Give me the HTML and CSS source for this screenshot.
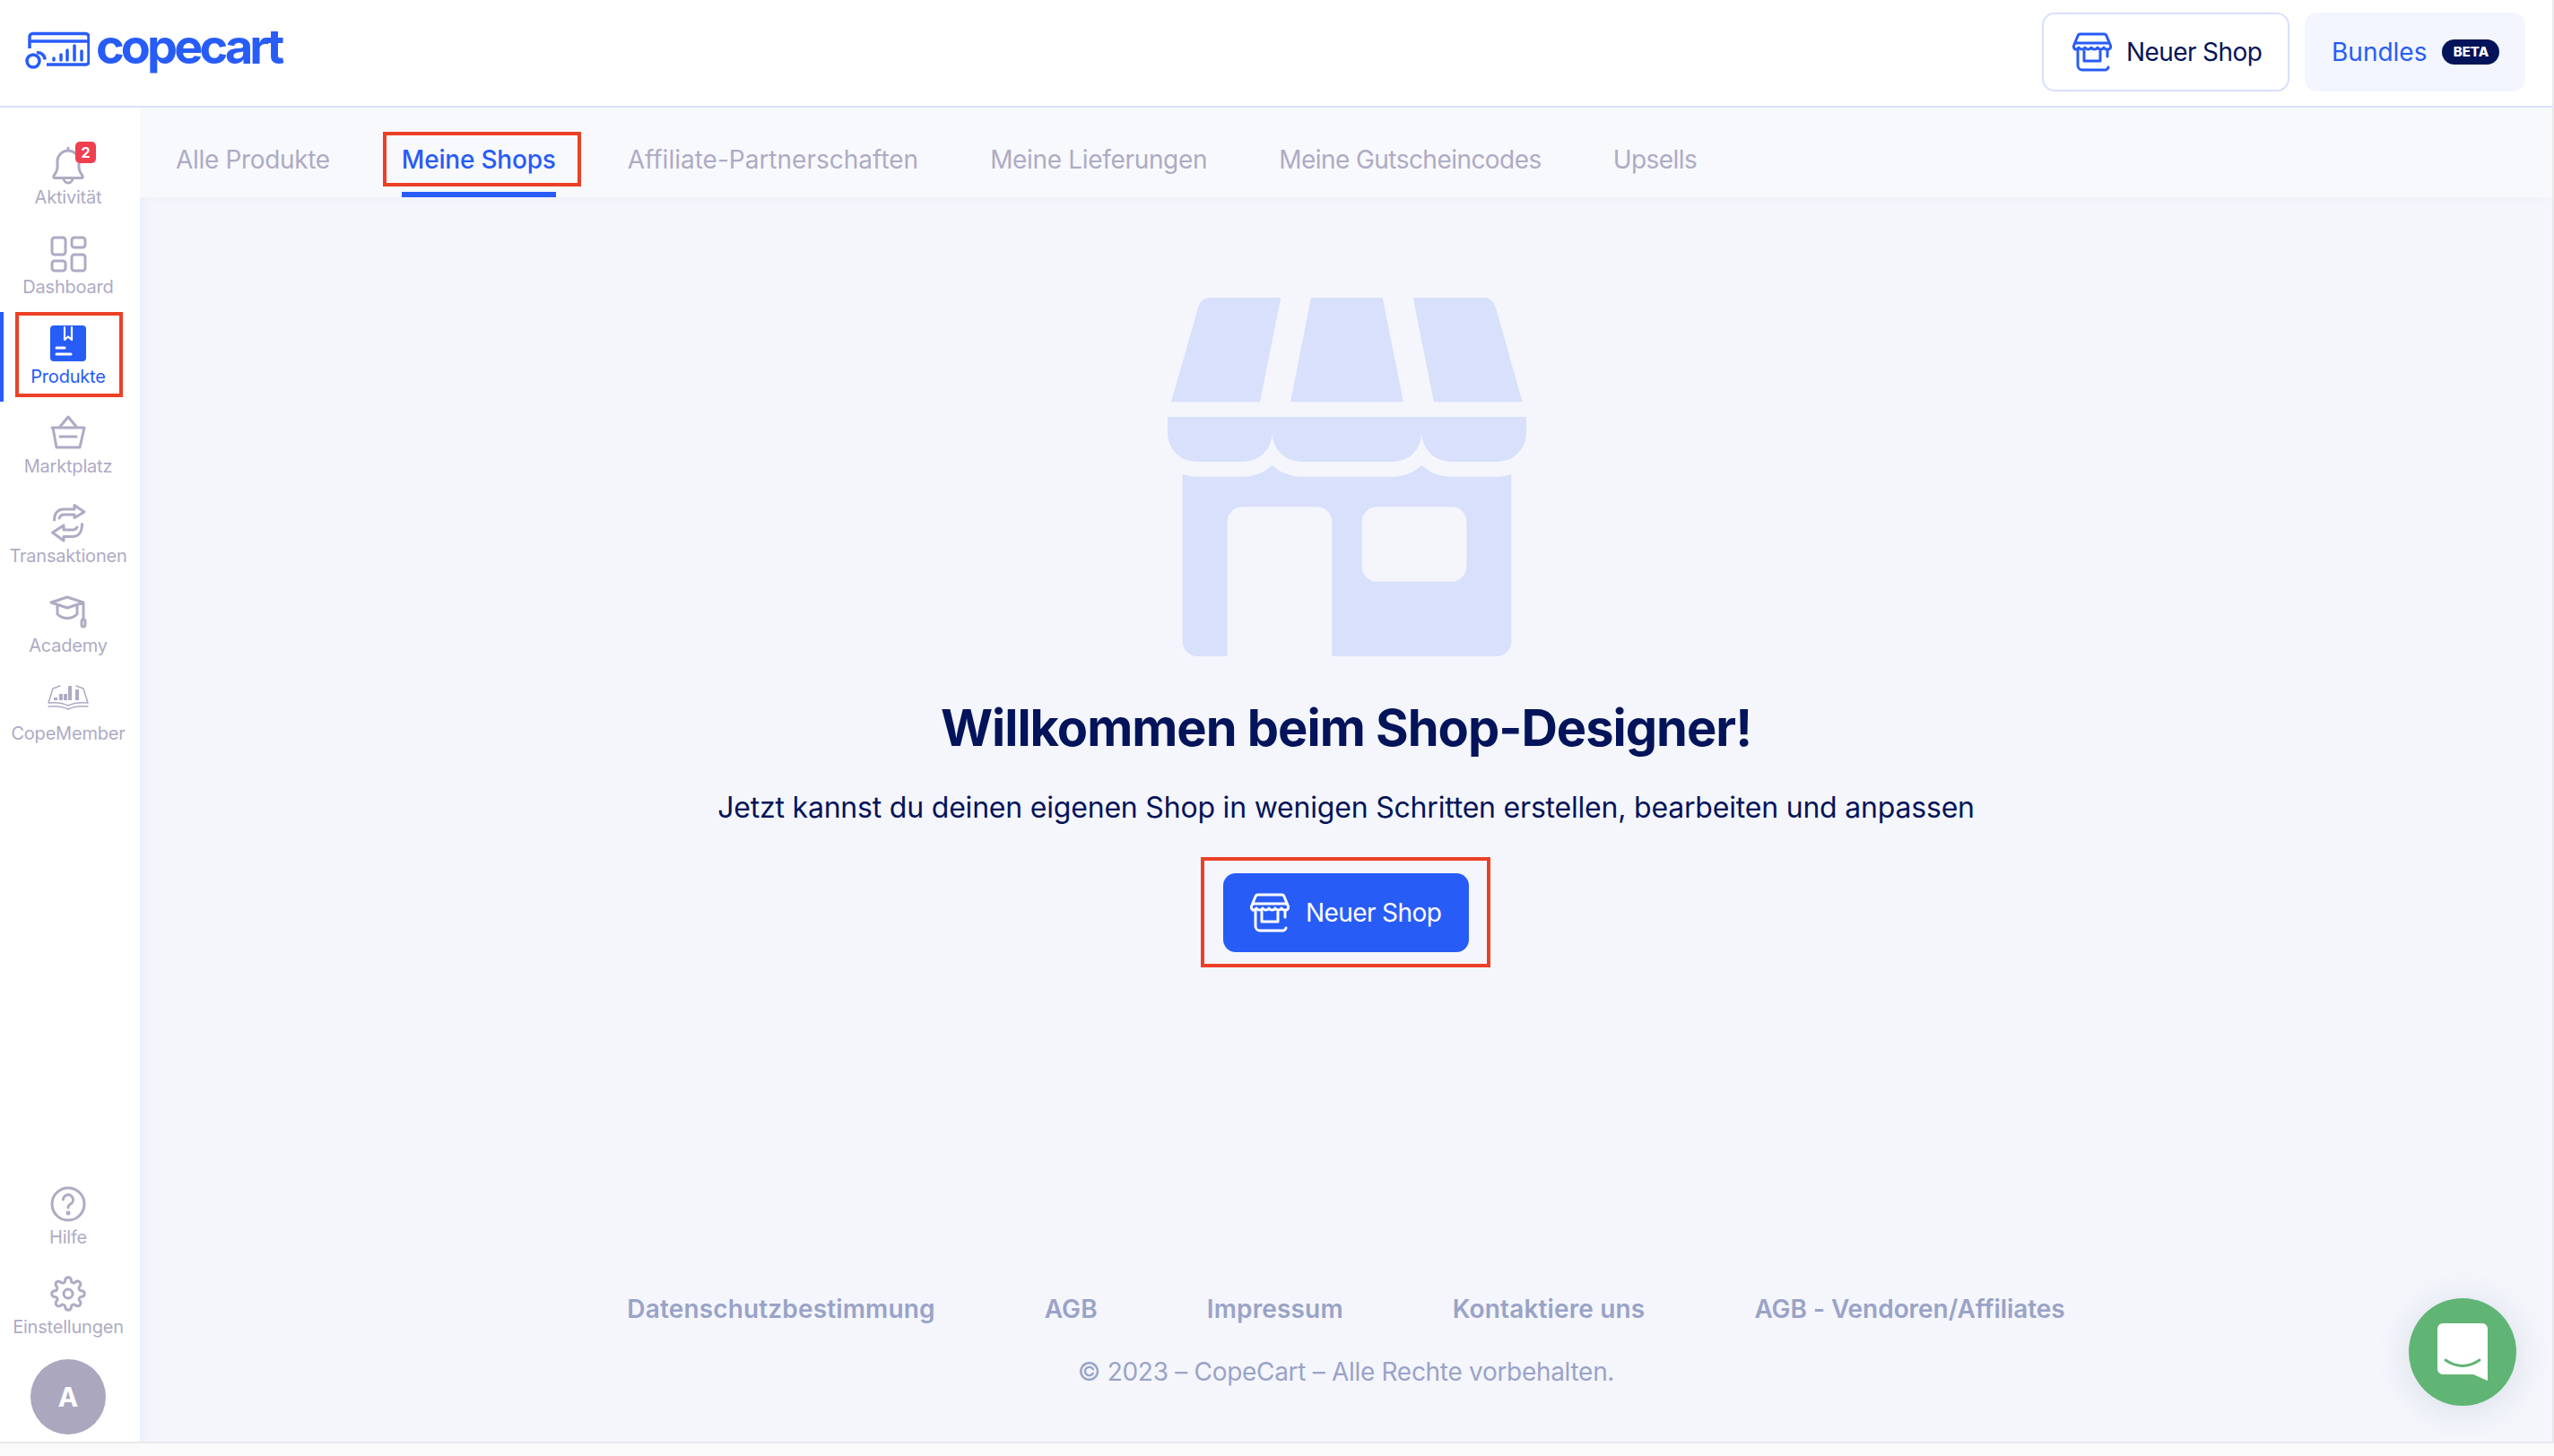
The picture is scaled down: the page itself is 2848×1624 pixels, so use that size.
FILE: index.html
```html
<!DOCTYPE html>
<html lang="de">
<head>
<meta charset="utf-8">
<title>CopeCart – Meine Shops</title>
<link rel="stylesheet" href="styles.css">
</head>
<body>
<svg class="defs" width="0" height="0" aria-hidden="true">
  <symbol id="store" viewBox="0 0 44 44">
    <path d="M9 2h26a3 3 0 0 1 3 2l4.500 11a3 3 0 0 1-2.500 4h-1a4 4 0 0 1-4-2 4 4 0 0 1-7 0 4 4 0 0 1-7 0 4 4 0 0 1-7 0 4 4 0 0 1-7 0 4 4 0 0 1-4 2H4a3 3 0 0 1-2.500-4L6 4a3 3 0 0 1 3-2z"/>
    <path d="M3 12h38M6 20v17a5 5 0 0 0 5 5h26a4 4 0 0 0 3-3M13 21v11h18V21M39 20v7"/>
  </symbol>
</svg>
<div class="app">
  <header class="topbar">
    <a class="logo">
      <svg class="logo-mark" viewBox="0 0 72 44">
        <path class="logo-line" d="M5 19V6a3.500 3.500 0 0 1 3.500-3.500h59A3.500 3.500 0 0 1 71 6v28a3 3 0 0 1-3 3H24"/>
        <path class="logo-line" d="M5 11h66"/>
        <circle class="logo-line" cx="9" cy="33" r="7"/>
        <path class="logo-line" d="M13 24a7.500 7.500 0 0 1 9 7.500"/>
        <path class="logo-bar" d="M32 32v-2M40 32v-6M47 32V21M55 32V16M63 32V22"/>
      </svg>
      <span class="logo-text">copecart</span>
    </a>
    <div class="top-actions">
      <button class="btn btn-outline"><svg class="store-icon"><use href="#store"/></svg>Neuer Shop</button>
      <button class="btn btn-soft">Bundles<span class="beta">BETA</span></button>
    </div>
  </header>
  <div class="body-row">
    <nav class="sidebar">
      <a class="nav-item">
        <span class="nav-icon">
          <svg viewBox="0 0 40 40"><path d="M20 5a12 12 0 0 0-12 12v7c0 4-2 6-4 9-.7 1-.2 2.500 1 2.500h30c1.200 0 1.700-1.500 1-2.500-2-3-4-5-4-9v-7A12 12 0 0 0 20 5zM20 5V2M15 36a5 5 0 0 0 10 0"/></svg>
          <span class="badge">2</span>
        </span>
        <span>Aktivität</span>
      </a>
      <a class="nav-item">
        <span class="nav-icon"><svg viewBox="0 0 40 40"><rect x="2" y="2" width="15" height="19" rx="3"/><rect x="24" y="2" width="15" height="11" rx="3"/><rect x="2" y="28" width="15" height="11" rx="3"/><rect x="24" y="21" width="15" height="18" rx="3"/></svg></span>
        <span>Dashboard</span>
      </a>
      <a class="nav-item active">
        <span class="nav-icon">
          <svg viewBox="0 0 40 40"><rect class="solid" width="40" height="40" rx="4"/><path class="cut-thin" d="M16 2v14l4-3.500 4 3.500V2"/><path class="cut" d="M7 25h9M7 32h16"/></svg>
        </span>
        <span>Produkte</span>
      </a>
      <a class="nav-item">
        <span class="nav-icon"><svg viewBox="0 0 40 40"><path d="M10 14 20 2l10 12M2 14h36l-5 22H7L3 14M11 24h18"/></svg></span>
        <span>Marktplatz</span>
      </a>
      <a class="nav-item">
        <span class="nav-icon"><svg viewBox="0 0 40 40"><path d="M4.500 17C4.500 9 9 5 15 5H27V.5L38 8 27 14.500V11H15C13 11 11 12.500 10 15"/><path d="M35.500 21.500C35.500 31 31 35.500 25 35.500H15V40L2.500 31 15 23V28H25C27 28 29 27 30 25"/></svg></span>
        <span>Transaktionen</span>
      </a>
      <a class="nav-item">
        <span class="nav-icon"><svg viewBox="0 0 40 40"><path d="M1 9 19 3l18 6-18 6zM8 12v10c6 6 16 6 22 0V12M37 9v18"/><rect x="35" y="28" width="4" height="8" rx="2"/></svg></span>
        <span>Academy</span>
      </a>
      <a class="nav-item">
        <span class="nav-icon nav-icon-short">
          <svg class="book" viewBox="0 0 46 28"><path class="thin" d="M1 21 6 5l8-3M45 21 40 5l-8-3M1 21c9-1 16 0 22 3 6-3 13-4 22-3M1 25c9-1 16 0 22 3 6-3 13-4 22-3"/><path class="bars" d="M9 18v-3M15 18v-7M20 18v-7M25 18V2M33 18V6"/></svg>
        </span>
        <span>CopeMember</span>
      </a>
      <a class="nav-item nav-bottom">
        <span class="nav-icon"><svg viewBox="0 0 40 40"><circle cx="20" cy="20" r="18"/><path d="M14.500 15a5.500 5.500 0 1 1 8 5c-2 1-2.500 2-2.500 4"/><circle class="dot" cx="20" cy="30" r="1"/></svg></span>
        <span>Hilfe</span>
      </a>
      <a class="nav-item">
        <span class="nav-icon"><svg class="gear" viewBox="0 0 24 24"><circle cx="12" cy="12" r="3"/><path d="M19.400 15a1.650 1.650 0 0 0 .33 1.820l.06.06a2 2 0 0 1 0 2.830 2 2 0 0 1-2.830 0l-.06-.06a1.650 1.650 0 0 0-1.820-.33 1.650 1.650 0 0 0-1 1.510V21a2 2 0 0 1-2 2 2 2 0 0 1-2-2v-.09A1.650 1.650 0 0 0 9 19.400a1.650 1.650 0 0 0-1.820.33l-.06.06a2 2 0 0 1-2.830 0 2 2 0 0 1 0-2.830l.06-.06a1.650 1.650 0 0 0 .33-1.820 1.650 1.650 0 0 0-1.510-1H3a2 2 0 0 1-2-2 2 2 0 0 1 2-2h.09A1.650 1.650 0 0 0 4.600 9a1.650 1.650 0 0 0-.33-1.820l-.06-.06a2 2 0 0 1 0-2.830 2 2 0 0 1 2.830 0l.06.06a1.650 1.650 0 0 0 1.820.33H9a1.650 1.650 0 0 0 1-1.510V3a2 2 0 0 1 2-2 2 2 0 0 1 2 2v.09a1.650 1.650 0 0 0 1 1.510 1.650 1.650 0 0 0 1.820-.33l.06-.06a2 2 0 0 1 2.830 0 2 2 0 0 1 0 2.830l-.06.06a1.650 1.650 0 0 0-.33 1.820V9a1.650 1.650 0 0 0 1.510 1H21a2 2 0 0 1 2 2 2 2 0 0 1-2 2h-.09a1.650 1.650 0 0 0-1.510 1z"/></svg></span>
        <span>Einstellungen</span>
      </a>
      <div class="avatar">A</div>
    </nav>
    <main class="main">
      <div class="tabs">
        <a class="tab">Alle Produkte</a>
        <a class="tab tab-active">Meine Shops</a>
        <a class="tab tab-wide">Affiliate-Partnerschaften</a>
        <a class="tab">Meine Lieferungen</a>
        <a class="tab tab-tight">Meine Gutscheincodes</a>
        <a class="tab tab-tight">Upsells</a>
      </div>
      <section class="welcome">
        <svg class="hero" viewBox="66 66 1200 1200">
          <path d="M78 415 168 100Q178 65 215 65H445L375 415ZM546 65H785L855 415H477ZM887 65H1118Q1154 65 1164 100L1253 415H957Z"/>
          <path d="M66 465H1266V520A96 96 0 0 1 1170 615H1012A96 96 0 0 1 916 520 96 96 0 0 1 820 615H512A96 96 0 0 1 416 520 96 96 0 0 1 320 615H162A96 96 0 0 1 66 520Z"/>
          <path fill-rule="evenodd" d="M116 657Q140 665 162 665H320Q375 665 416 627 457 665 512 665H820Q875 665 916 627 957 665 1012 665H1170Q1192 665 1216 657V1216A50 50 0 0 1 1166 1266H616V816A50 50 0 0 0 566 766H316A50 50 0 0 0 266 816V1266H166A50 50 0 0 1 116 1216ZM766 766H1016A50 50 0 0 1 1066 816V966A50 50 0 0 1 1016 1016H766A50 50 0 0 1 716 966V816A50 50 0 0 1 766 766Z"/>
        </svg>
        <h1 class="title">Willkommen beim Shop-Designer!</h1>
        <p class="subtitle">Jetzt kannst du deinen eigenen Shop in wenigen Schritten erstellen, bearbeiten und anpassen</p>
        <button class="btn btn-primary"><svg class="store-icon"><use href="#store"/></svg>Neuer Shop</button>
      </section>
      <footer class="footer">
        <div class="footer-links">
          <a>Datenschutzbestimmung</a>
          <a>AGB</a>
          <a>Impressum</a>
          <a>Kontaktiere uns</a>
          <a class="link-tight">AGB - Vendoren/Affiliates</a>
        </div>
        <p class="copyright">© 2023 – CopeCart – Alle Rechte vorbehalten.</p>
      </footer>
    </main>
  </div>
</div>
<div class="bottom-strip"></div>
<div class="mark mark-tab"></div>
<div class="mark mark-nav"></div>
<div class="mark mark-btn"></div>
<button class="chat" aria-label="Chat">
  <svg viewBox="0 0 120 120"><path class="chat-bubble" d="M38 28H82a6 6 0 0 1 6 6V92L72 85H38a6 6 0 0 1-6-6V34a6 6 0 0 1 6-6z"/><path class="chat-smile" d="M41 69q19 13 38 0"/></svg>
</button>
</body>
</html>
```
FILE: styles.css
```css
* { box-sizing: border-box; }
html, body { margin: 0; height: 100%; }
body {
  width: 2848px;
  height: 1624px;
  overflow: hidden;
  background: #fafafa;
  font-family: "Inter", "Noto Sans", sans-serif;
  color: #03145a;
  position: relative;
}
body::after {
  content: "";
  position: absolute;
  right: 0;
  top: 0;
  width: 2px;
  height: 1608px;
  background: #e9e9ec;
}
button { font-family: inherit; }
.defs { display: block; height: 0; }

.app {
  width: 2848px;
  height: 1608px;
  display: flex;
  flex-direction: column;
}

/* top bar */
.topbar {
  height: 120px;
  flex: none;
  display: flex;
  align-items: flex-start;
  justify-content: space-between;
  background: #fff;
  border-bottom: 2px solid #d8e0fb;
  padding: 14px 32px 0 28px;
}
.logo { display: flex; align-items: flex-start; gap: 7px; padding-top: 10px; color: #285cf7; }
.logo-mark { width: 72px; height: 44px; flex: none; margin-top: 11px; }
.logo-line { fill: none; stroke: #285cf7; stroke-width: 3.500; }
.logo-bar { fill: none; stroke: #285cf7; stroke-width: 3.500; stroke-linecap: round; }
.logo-text {
  font-size: 54px;
  line-height: 56px;
  font-weight: 700;
  letter-spacing: -3.900px;
}
.top-actions { display: flex; gap: 17px; }

.btn {
  height: 88px;
  border-radius: 14px;
  border: 0;
  display: flex;
  align-items: center;
  font-size: 28px;
  letter-spacing: -.6px;
  padding: 0;
  font-weight: 400;
}
.store-icon {
  width: 44px;
  height: 44px;
  flex: none;
  fill: none;
  stroke: currentColor;
  stroke-width: 3;
  stroke-linecap: round;
  stroke-linejoin: round;
}
.btn-outline {
  width: 276px;
  background: #fff;
  color: #03145a;
  border: 2px solid #d8e0fb;
  padding-left: 32px;
  gap: 16px;
}
.btn-outline .store-icon { color: #285cf7; }
.btn-soft {
  width: 246px;
  background: #f3f6fe;
  color: #285cf7;
  padding-left: 30px;
  gap: 17px;
  letter-spacing: 0;
}
.beta {
  width: 64px;
  height: 28px;
  border-radius: 14px;
  background: #03145a;
  color: #fff;
  font-size: 15px;
  font-weight: 800;
  line-height: 28px;
  text-align: center;
}
.btn-primary {
  width: 274px;
  background: #285cf7;
  color: #fff;
  padding-left: 30px;
  gap: 18px;
  margin: 51px 2px 0 0;
}

/* body */
.body-row { flex: 1; display: flex; min-height: 0; }

.sidebar {
  width: 156px;
  flex: none;
  background: #fff;
  display: flex;
  flex-direction: column;
  align-items: stretch;
  padding: 28px 4px 8px 0;
}
.nav-item {
  height: 100px;
  flex: none;
  padding-top: 15px;
  display: flex;
  flex-direction: column;
  align-items: center;
  font-size: 20px;
  letter-spacing: -.2px;
  line-height: 34px;
  color: #aeabc4;
  white-space: nowrap;
  position: relative;
}
.nav-bottom { margin-top: auto; }
.nav-icon {
  position: relative;
  width: 40px;
  height: 40px;
  flex: none;
  display: block;
}
.nav-icon-short { height: 38px; }
.nav-icon svg {
  display: block;
  width: 40px;
  height: 40px;
  overflow: visible;
  fill: none;
  stroke: currentColor;
  stroke-width: 3;
  stroke-linecap: round;
  stroke-linejoin: round;
}
.nav-icon svg.book { width: 46px; height: 28px; margin-left: -3px; }
.nav-icon svg.gear { stroke-width: 1.800; }
.thin { stroke-width: 1.500; }
.bars { stroke-width: 4; stroke-linecap: butt; }
.dot { fill: currentColor; }
.solid { fill: #285cf7; stroke: none; }
.cut { stroke: #fff; }
.cut-thin { stroke: #fff; stroke-width: 2.200; }
.badge {
  position: absolute;
  left: 28px;
  top: -5px;
  width: 23px;
  height: 24px;
  border-radius: 5px;
  background: #ef4050;
  color: #fff;
  font-size: 16px;
  font-weight: 700;
  line-height: 24px;
  letter-spacing: 0;
  text-align: center;
}
.nav-item.active { color: #285cf7; }
.nav-item.active::before {
  content: "";
  position: absolute;
  left: 0;
  top: 0;
  width: 4px;
  height: 100px;
  background: #285cf7;
}
.avatar {
  width: 84px;
  height: 84px;
  flex: none;
  margin: 8px 0 0 34px;
  border-radius: 50%;
  background: #aaa7bf;
  color: #fff;
  font-size: 30px;
  font-weight: 700;
  line-height: 84px;
  text-align: center;
}

/* main */
.main {
  flex: 1;
  min-width: 0;
  display: flex;
  flex-direction: column;
  background: #f4f6fc;
  box-shadow: inset 14px 0 14px -12px #e6ebfa;
}
.tabs {
  height: 100px;
  flex: none;
  display: flex;
  gap: 80px;
  padding-left: 40px;
  background: #f8f9fd;
  box-shadow: 0 6px 10px -6px #eef0f9;
}
.tab {
  height: 100px;
  padding-top: 41px;
  font-size: 28px;
  letter-spacing: -.33px;
  line-height: 34px;
  color: #aeabc4;
  white-space: nowrap;
}
.tab-wide { letter-spacing: 0; }
.tab-tight { letter-spacing: -.55px; }
.tab-active {
  color: #285cf7;
  font-weight: 500;
  letter-spacing: -.2px;
  border-bottom: 6px solid #285cf7;
}
.welcome {
  display: flex;
  flex-direction: column;
  align-items: center;
  padding-top: 112px;
}
.hero { width: 400px; height: 400px; display: block; fill: #d8e0fb; flex: none; }
.title {
  margin: 46px 2px 0 0;
  font-size: 56px;
  letter-spacing: -1px;
  line-height: 68px;
  font-weight: 700;
  color: #03145a;
}
.subtitle {
  margin: 33px 2px 0 0;
  font-size: 32px;
  letter-spacing: -.2px;
  line-height: 44px;
  color: #03145a;
}
.footer {
  margin-top: auto;
  padding: 0 2px 61px 0;
  display: flex;
  flex-direction: column;
  align-items: center;
  color: #9aa3c7;
  font-size: 28px;
  line-height: 34px;
}
.footer-links { display: flex; gap: 122px; font-weight: 600; letter-spacing: .15px; }
.link-tight { letter-spacing: -.05px; }
.copyright { margin: 36px 0 0; letter-spacing: -.3px; }

.bottom-strip { height: 16px; border-top: 2px solid #e9e9ec; background: #fafafa; }

/* annotation frames over the page */
.mark { position: absolute; border: 4px solid #ec4026; }
.mark-tab { left: 427px; top: 147px; width: 221px; height: 61px; }
.mark-nav { left: 17px; top: 348px; width: 120px; height: 95px; }
.mark-btn { left: 1339px; top: 956px; width: 323px; height: 123px; }

/* chat launcher */
.chat {
  position: absolute;
  left: 2686px;
  top: 1448px;
  width: 120px;
  height: 120px;
  padding: 0;
  border: 0;
  border-radius: 50%;
  background: #60b574;
  box-shadow: 0 4px 40px rgba(30, 40, 80, .12);
}
.chat svg { display: block; width: 120px; height: 120px; }
.chat-bubble { fill: #fff; }
.chat-smile { fill: none; stroke: #60b574; stroke-width: 3; stroke-linecap: round; }
```
